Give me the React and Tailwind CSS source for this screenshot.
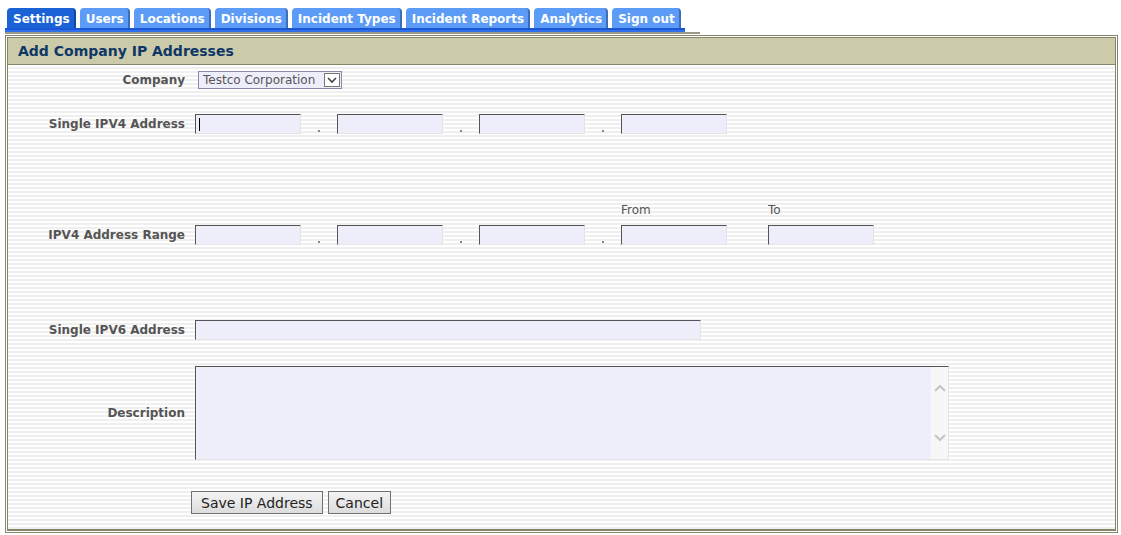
import React from "react";

const tabs = ["Settings", "Users", "Locations", "Divisions", "Incident Types", "Incident Reports", "Analytics", "Sign out"];

function Field({ w = "w-[106px]", caret = false }) {
  return (
    <div className={`${w} h-[20px] bg-[#eeeefb] border-t border-l border-t-[#555] border-l-[#555] border-r border-b border-r-[#e4e4e4] border-b-[#e4e4e4] relative`}>
      {caret && <div className="absolute left-[3px] top-[3px] w-[1px] h-[13px] bg-black" />}
    </div>
  );
}

function Dot() {
  return (
    <div className="w-[36px] h-[20px] flex items-end justify-center pb-[2px]">
      <div className="w-[2px] h-[2px] bg-[#888]" />
    </div>
  );
}

function IpRow({ caret }) {
  return (
    <div className="flex items-center">
      <Field caret={caret} />
      <Dot />
      <Field />
      <Dot />
      <Field />
      <Dot />
      <Field />
    </div>
  );
}

function Label({ children }) {
  return (
    <div className="w-[177px] text-right font-bold text-[12px] text-[#555] shrink-0">{children}</div>
  );
}

export default function App() {
  return (
    <div className="w-[1121px] h-[535px] bg-white overflow-hidden" style={{ fontFamily: '"DejaVu Sans", Verdana, sans-serif' }}>
      <div className="pt-[8px] pl-[5px]">
        {/* tabs */}
        <div className="flex gap-[4px] pl-[2px] items-end h-[20px]">
          {tabs.map((t, i) => (
            <div
              key={t}
              className={`h-[20px] pl-[6px] pr-[4px] pt-[2px] rounded-t-[4px] flex items-center text-[12px] font-bold text-white leading-none border-r-2 ${
                i === 0 ? "bg-[#1a62d6] border-r-[#1048a8]" : "bg-[#5c9cf6] border-r-[#3d6fb8]"
              }`}
            >
              {t}
            </div>
          ))}
        </div>
        <div className="w-[680px] h-[2px] bg-[#1a56d6]" />
        <div className="w-[680px] h-[2px] bg-[#2f6fe8]" />
        <div className="w-[695px] h-[2px] bg-[#9a9a86]" />
        {/* box */}
        <div className="w-[1113px] border border-[#85856a] p-[1px] mt-[1px]">
          <div className="border border-[#85856a] border-b-2">
            <div className="h-[27px] bg-[#cbcbaa] border-b border-b-[#85856a] flex items-center pl-[10px] text-[14px] font-bold text-[#0e3766]">
              Add Company IP Addresses
            </div>
            <div className="h-[464px] bg-[repeating-linear-gradient(to_bottom,#ffffff_0px,#ffffff_2px,#efefef_2px,#efefef_4px)] pt-[6px]">
              {/* company */}
              <div className="flex items-center gap-[13px] h-[18px]">
                <Label>Company</Label>
                <div className="w-[144px] h-[18px] bg-[#eeeefb] border border-[#8a8aa8] flex items-center justify-between pl-[4px] pr-[1px]">
                  <span className="text-[12px] text-[#555] leading-none">Testco Corporation</span>
                  <div className="w-[16px] h-[14px] border border-[#777] bg-white flex items-center justify-center">
                    <svg width="10" height="7" viewBox="0 0 10 7"><path d="M1 1 L5 5 L9 1" stroke="#444" strokeWidth="1.6" fill="none" /></svg>
                  </div>
                </div>
              </div>
              {/* single ipv4 */}
              <div className="flex items-center gap-[10px] mt-[25px]">
                <Label>Single IPV4 Address</Label>
                <IpRow caret />
              </div>
              {/* from/to */}
              <div className="flex mt-[68px] h-[16px] items-center text-[12px] text-[#555]">
                <div className="w-[613px]" />
                <div className="w-[147px]">From</div>
                <div>To</div>
              </div>
              <div className="flex items-center gap-[10px] mt-[7px]">
                <Label>IPV4 Address Range</Label>
                <IpRow />
                <div className="w-[21px]" />
                <Field />
              </div>
              {/* ipv6 */}
              <div className="flex items-center gap-[10px] mt-[75px]">
                <Label>Single IPV6 Address</Label>
                <Field w="w-[506px]" />
              </div>
              {/* description */}
              <div className="flex items-center gap-[10px] mt-[26px]">
                <Label>Description</Label>
                <div className="w-[754px] h-[94px] bg-[#eeeefb] border-t border-l border-t-[#555] border-l-[#555] border-r border-b border-r-[#e4e4e4] border-b-[#e4e4e4] flex justify-end">
                  <div className="w-[17px] h-full bg-[#f7f7f7] flex flex-col items-center justify-between py-[17px]">
                    <svg width="12" height="8" viewBox="0 0 12 8"><path d="M1 7 L6 2 L11 7" stroke="#c4c4c4" strokeWidth="2" fill="none" /></svg>
                    <svg width="12" height="8" viewBox="0 0 12 8"><path d="M1 1 L6 6 L11 1" stroke="#c4c4c4" strokeWidth="2" fill="none" /></svg>
                  </div>
                </div>
              </div>
              {/* buttons */}
              <div className="flex gap-[5px] mt-[31px] pl-[183px]">
                <button className="h-[23px] px-[9px] border border-[#707070] bg-[linear-gradient(to_bottom,#f4f4f4,#dcdcdc)] text-[14px] text-[#222] leading-none" style={{ fontFamily: '"DejaVu Sans", Verdana, sans-serif' }}>
                  Save IP Address
                </button>
                <button className="h-[23px] px-[7px] border border-[#707070] bg-[linear-gradient(to_bottom,#f4f4f4,#dcdcdc)] text-[14px] text-[#222] leading-none" style={{ fontFamily: '"DejaVu Sans", Verdana, sans-serif' }}>
                  Cancel
                </button>
              </div>
            </div>
          </div>
        </div>
      </div>
    </div>
  );
}
